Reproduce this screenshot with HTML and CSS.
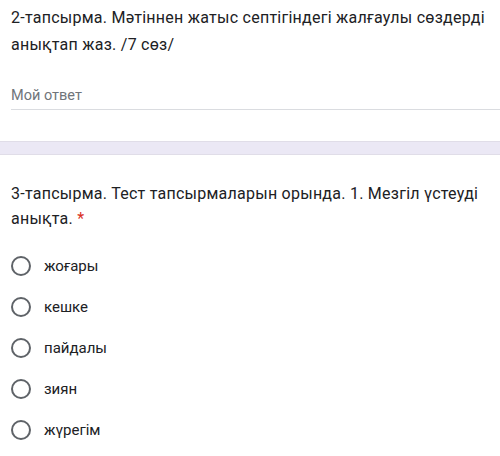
FILE: index.html
```html
<!DOCTYPE html>
<html>
<head>
<meta charset="utf-8">
<link rel="stylesheet" href="styles.css">
</head>
<body>
<section class="card first">
  <div class="title">2-тапсырма. Мәтіннен жатыс септігіндегі жалғаулы сөздерді анықтап жаз. /7 сөз/</div>
  <div class="answer">Мой ответ</div>
</section>
<div class="band"></div>
<section class="card second">
  <div class="title">3-тапсырма. Тест тапсырмаларын орында. 1. Мезгіл үстеуді анықта. <span class="req">*</span></div>
  <div class="options">
    <div class="opt"><span class="radio"></span><span class="label">жоғары</span></div>
    <div class="opt"><span class="radio"></span><span class="label">кешке</span></div>
    <div class="opt"><span class="radio"></span><span class="label">пайдалы</span></div>
    <div class="opt"><span class="radio"></span><span class="label">зиян</span></div>
    <div class="opt"><span class="radio"></span><span class="label">жүрегім</span></div>
  </div>
</section>
</body>
</html>
```
FILE: styles.css
```css
html, body {
  margin: 0;
  padding: 0;
  background: #ffffff;
  font-family: Roboto, "Noto Sans", sans-serif;
  color: #202124;
}
.card {
  padding-left: 11px;
}
.first {
  padding-top: 4px;
  height: 141px;
  box-sizing: border-box;
}
.title {
  font-size: 16px;
  line-height: 25px;
  letter-spacing: 0.25px;
  padding-right: 6px;
}
.first .title {
  line-height: 27px;
}
.answer {
  margin-top: 28px;
  font-size: 14.5px;
  color: #70757a;
  line-height: 20px;
  padding-bottom: 3px;
  border-bottom: 1px solid #dadce0;
}
.band {
  height: 12px;
  background: #ebe8f5;
  border-top: 1px solid #e0dde8;
  border-bottom: 1px solid #e0dde8;
}
.second {
  padding-top: 26px;
}
.req {
  color: #d93025;
}
.options {
  margin-top: 24px;
  display: flex;
  flex-direction: column;
  gap: 20px;
}
.opt {
  display: flex;
  align-items: center;
  height: 21px;
}
.radio {
  width: 16px;
  height: 16px;
  border: 2px solid #5f6368;
  border-radius: 50%;
  flex: none;
}
.label {
  margin-left: 13px;
  font-size: 15px;
  color: #202124;
}
```
